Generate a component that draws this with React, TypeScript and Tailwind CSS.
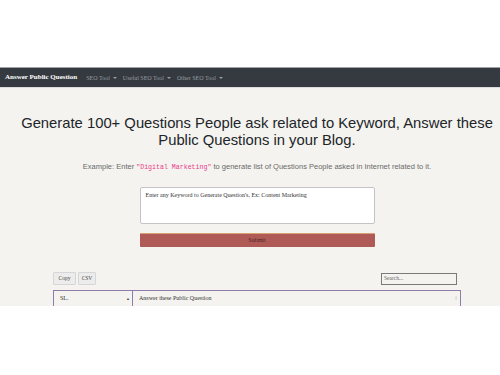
import React from "react";

const serif = { fontFamily: '"Liberation Serif", "Times New Roman", serif' };
const sans = { fontFamily: '"Liberation Sans", Arial, sans-serif' };
const mono = { fontFamily: '"Liberation Mono", "Courier New", monospace' };

function Caret() {
  return <span className="ml-[3px] inline-block align-middle border-l-[2px] border-r-[2px] border-t-[2.5px] border-l-transparent border-r-transparent border-t-[#9a9da0]" />;
}

export default function App() {
  return (
    <div className="w-[500px] h-[375px] bg-white overflow-hidden" style={serif}>
      <div className="h-[67px] bg-white" />
      <nav className="h-[21px] bg-[#343a40] border-t border-[#9fa2a6] border-b border-b-[#dcdcdc] flex items-center pl-[5px]">
        <span className="text-white text-[7px] font-bold leading-none">Answer Public Question</span>
        <div className="flex items-center ml-[9px] gap-[6px] text-[6px] text-[#9a9da0] leading-none">
          <span className="flex items-center">SEO Tool<Caret /></span>
          <span className="flex items-center">Useful SEO Tool<Caret /></span>
          <span className="flex items-center">Other SEO Tool<Caret /></span>
        </div>
      </nav>
      <main className="bg-[#f4f3ef] h-[218px] pl-[14px] flex flex-col items-center">
        <h1 className="mt-[27px] shrink-0 whitespace-nowrap text-center text-[#212529] text-[14.8px] leading-[17px]" style={sans}>
          Generate 100+ Questions People ask related to Keyword, Answer these<br />Public Questions in your Blog.
        </h1>
        <p className="mt-[13px] whitespace-nowrap text-[7.5px] leading-[10px] text-[#6a6a6a]" style={sans}>
          Example: Enter <span className="text-[#e83e8c] text-[6.6px]" style={mono}>"Digital Marketing"</span> to generate list of Questions People asked in Internet related to it.
        </p>
        <div className="mt-[14px] w-[235px] h-[37px] bg-white border border-[#c4c4c8] rounded-[2px] px-[5px] pt-[3px] text-[6px] text-[#333] leading-[8px]">
          Enter any Keyword to Generate Question's, Ex: Content Marketing
        </div>
        <div className="mt-[9px] w-[235px] h-[14px] bg-[#b05a58] border-t border-[#d9a070] rounded-[1px] flex items-center justify-center text-[6px] text-[#4a2424]">
          Submit
        </div>
        <div className="mt-[25px] w-[408px] flex items-center justify-between">
          <div className="flex gap-[2px]">
            <div className="w-[23px] h-[13px] bg-[#ececec] border border-[#d6d6d6] rounded-[1px] flex items-center justify-center text-[5.5px] text-[#444]">Copy</div>
            <div className="w-[18px] h-[13px] bg-[#ececec] border border-[#d6d6d6] rounded-[1px] flex items-center justify-center text-[5.5px] text-[#444]">CSV</div>
          </div>
          <div className="w-[76px] h-[12px] border border-[#7a7a7a] mr-[4px] flex items-center pl-[2px] text-[5.5px] text-[#666]">Search...</div>
        </div>
        <div className="mt-[5px] w-[408px] h-[16px] border-[1.5px] border-b-0 border-[#8f7cab] flex text-[6px] text-[#333]">
          <div className="w-[79px] border-r-[1.5px] border-[#8f7cab] flex items-center pl-[6px] pr-[2px] justify-between">
            <span>SL.</span>
            <span className="text-[4px] text-[#555]">▲</span>
          </div>
          <div className="flex-1 flex items-center pl-[6px] pr-[2px] justify-between">
            <span>Answer these Public Question</span>
            <span className="text-[5px] text-[#ccc]">⇕</span>
          </div>
        </div>
      </main>
    </div>
  );
}
